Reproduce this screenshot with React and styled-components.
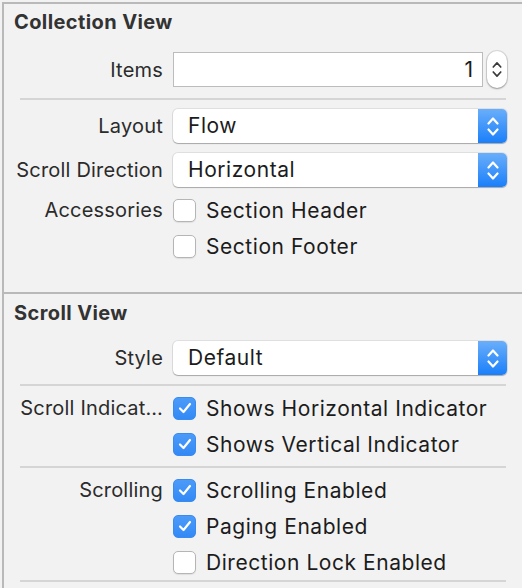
import styled, { createGlobalStyle } from "styled-components"

const GlobalStyle = createGlobalStyle`
  html, body {
    margin: 0;
    padding: 0;
    background: #f2f2f2;
  }
  body {
    font-family: Inter, "Noto Sans", sans-serif;
    color: #2a2a2a;
    -webkit-font-smoothing: antialiased;
  }
`

const Chevrons = ({ color, w = 12, h = 21, stroke = 2.2 }) => (
  <svg width={w} height={h} viewBox="0 0 12 21" fill="none">
    <path d="M1.5 7.5 L6 2.5 L10.5 7.5" stroke={color} strokeWidth={stroke} strokeLinecap="round" strokeLinejoin="round" />
    <path d="M1.5 13.5 L6 18.5 L10.5 13.5" stroke={color} strokeWidth={stroke} strokeLinecap="round" strokeLinejoin="round" />
  </svg>
)

const Check = () => (
  <svg width="14" height="12" viewBox="0 0 14 12" fill="none">
    <path d="M2 6.5 L5.5 10 L12 2" stroke="#fff" strokeWidth="2.2" strokeLinecap="round" strokeLinejoin="round" />
  </svg>
)

const Popup = ({ value }) => (
  <PopupButton>
    <PopupValue>{value}</PopupValue>
    <PopupArrows>
      <Chevrons color="#fff" />
    </PopupArrows>
  </PopupButton>
)

const CheckItem = ({ label, text, checked, gap }) => (
  <Row $height={36} $gap={gap}>
    <Label>{label}</Label>
    <CheckLine>
      <Box $checked={checked}>{checked && <Check />}</Box>
      <CheckText>{text}</CheckText>
    </CheckLine>
  </Row>
)

const App = () => {
  return (
    <Page>
      <GlobalStyle />
      <Inspector>
        <Section $top={8} $bottom={28}>
          <Header>Collection View</Header>

          <Row $height={37} $gap={19}>
            <Label>Items</Label>
            <FieldLine>
              <TextField>1</TextField>
              <Stepper>
                <Chevrons color="#3a3a3a" w={10} h={19} stroke={2} />
              </Stepper>
            </FieldLine>
          </Row>

          <Separator $gap={10} />

          <Row $height={34} $gap={9}>
            <Label>Layout</Label>
            <Popup value="Flow" />
          </Row>
          <Row $height={34} $gap={10}>
            <Label>Scroll Direction</Label>
            <Popup value="Horizontal" />
          </Row>

          <CheckItem gap={5} label="Accessories" text="Section Header" />
          <CheckItem label="" text="Section Footer" />
        </Section>

        <Section $top={9} $bottom={0}>
          <Header>Scroll View</Header>

          <Row $height={34} $gap={18}>
            <Label>Style</Label>
            <Popup value="Default" />
          </Row>

          <Separator $gap={9} />

          <CheckItem gap={4} label="Scroll Indicat…" text="Shows Horizontal Indicator" checked />
          <CheckItem label="" text="Shows Vertical Indicator" checked />

          <Separator $gap={4} />

          <CheckItem gap={4} label="Scrolling" text="Scrolling Enabled" checked />
          <CheckItem label="" text="Paging Enabled" checked />
          <CheckItem label="" text="Direction Lock Enabled" />

          <Separator $gap={0} />
        </Section>
      </Inspector>
    </Page>
  )
}

const Page = styled.div`
  width: 522px;
  height: 588px;
  overflow: hidden;
  box-sizing: border-box;
  padding: 2px 0 0 2px;
  background: #f2f2f2;
`

const Inspector = styled.div`
  height: 100%;
  box-sizing: border-box;
  border-top: 2px solid #b9b9b9;
  border-left: 2px solid #b9b9b9;
`

const Section = styled.section`
  display: flex;
  flex-direction: column;
  padding-top: ${p => p.$top}px;
  padding-bottom: ${p => p.$bottom}px;

  & + & {
    border-top: 2px solid #b9b9b9;
  }
`

const Header = styled.div`
  padding-left: 10px;
  font-size: 20px;
  line-height: 20px;
  font-weight: 700;
  color: #333;
  letter-spacing: 0.4px;
`

const Row = styled.div`
  display: grid;
  grid-template-columns: 159px 1fr;
  column-gap: 10px;
  align-items: center;
  height: ${p => p.$height}px;
  margin-top: ${p => p.$gap || 0}px;
  padding-right: 15px;
`

const Label = styled.div`
  text-align: right;
  white-space: nowrap;
  overflow: hidden;
  font-size: 20px;
  letter-spacing: 0.2px;
  color: #2b2b2b;
`

const Separator = styled.div`
  height: 2px;
  background: #d5d5d5;
  margin: ${p => p.$gap}px 16px 0 16px;
`

const FieldLine = styled.div`
  display: flex;
  align-items: center;
  gap: 4px;
  height: 100%;
`

const TextField = styled.div`
  flex: 1;
  height: 35px;
  box-sizing: border-box;
  background: #fff;
  border: 1px solid #bcbcbc;
  padding-right: 9px;
  text-align: right;
  font-size: 21px;
  line-height: 33px;
  color: #1c1c1c;
`

const Stepper = styled.div`
  width: 20px;
  height: 37px;
  border-radius: 10px;
  background: #fff;
  box-shadow: 0 0 0 1px rgba(0, 0, 0, 0.1), 0 1px 2px rgba(0, 0, 0, 0.3);
  display: flex;
  align-items: center;
  justify-content: center;
`

const PopupButton = styled.div`
  display: flex;
  height: 34px;
  border-radius: 5px;
  background: #fff;
  box-shadow: 0 0 0 1px rgba(0, 0, 0, 0.08), 0 1px 1px rgba(0, 0, 0, 0.25);
`

const PopupValue = styled.div`
  flex: 1;
  padding-left: 15px;
  font-size: 21px;
  letter-spacing: 0.55px;
  line-height: 34px;
  color: #1c1c1c;
`

const PopupArrows = styled.div`
  width: 29px;
  border-radius: 0 5px 5px 0;
  background: linear-gradient(#6aaefa, #1a7ffa);
  display: flex;
  align-items: center;
  justify-content: center;
`

const CheckLine = styled.div`
  display: flex;
  align-items: center;
  gap: 10px;
`

const Box = styled.div`
  width: 23px;
  height: 23px;
  box-sizing: border-box;
  border-radius: 5px;
  display: flex;
  align-items: center;
  justify-content: center;
  background: ${p => p.$checked ? "linear-gradient(#4b9bf8, #3389f6)" : "#fff"};
  border: 1px solid ${p => p.$checked ? "#3a8bf0" : "#b5b5b5"};
  box-shadow: ${p => p.$checked ? "none" : "0 1px 1px rgba(0, 0, 0, 0.08)"};
`

const CheckText = styled.div`
  font-size: 21px;
  letter-spacing: 0.55px;
  color: #1c1c1c;
  white-space: nowrap;
`

export default App
